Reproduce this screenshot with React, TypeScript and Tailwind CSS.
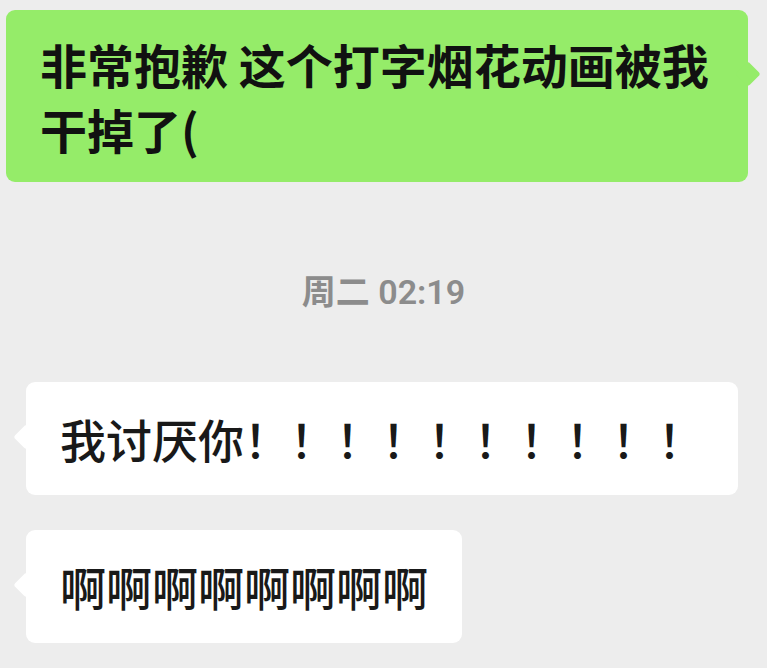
import React from "react";

const cjk = { fontFamily: '"Noto Sans CJK SC", "Noto Sans", sans-serif' };

export default function App() {
  return (
    <div className="w-[767px] h-[668px] bg-[#ededed] overflow-hidden flex flex-col pt-[10px]" style={cjk}>
      <div className="flex justify-start pl-[6px]">
        <div className="relative w-[742px] bg-[#95ec69] rounded-[9px] pl-[34px] pr-[10px] py-[21px] text-[47px] leading-[65px] font-bold text-[#111111]">
          <div className="absolute right-[-9px] top-[55px] w-[18px] h-[18px] bg-[#95ec69] rotate-45 rounded-[3px]" />
          <span className="relative whitespace-nowrap">非常抱歉 这个打字烟花动画被我<br />干掉了(</span>
        </div>
      </div>

      <div className="mt-[90px] h-[40px] flex items-center justify-center text-[34px] leading-[40px] font-semibold text-[#8c8c8c]" style={{ fontFamily: 'Roboto, "Noto Sans CJK SC", sans-serif' }}>
        周二 02:19
      </div>

      <div className="mt-[70px] pl-[26px] flex flex-col gap-[35px]">
        <div className="relative w-[712px] bg-white rounded-[9px] pl-[34px] py-[24px] text-[46px] leading-[65px] font-medium text-[#191919]">
          <div className="absolute left-[-9px] top-[46px] w-[18px] h-[18px] bg-white rotate-45 rounded-[3px]" />
          <span className="relative whitespace-nowrap">我讨厌你！！！！！！！！！！</span>
        </div>
        <div className="relative w-[436px] bg-white rounded-[9px] pl-[34px] py-[24px] text-[46px] leading-[65px] font-medium text-[#191919]">
          <div className="absolute left-[-9px] top-[46px] w-[18px] h-[18px] bg-white rotate-45 rounded-[3px]" />
          <span className="relative whitespace-nowrap">啊啊啊啊啊啊啊啊</span>
        </div>
      </div>
    </div>
  );
}
